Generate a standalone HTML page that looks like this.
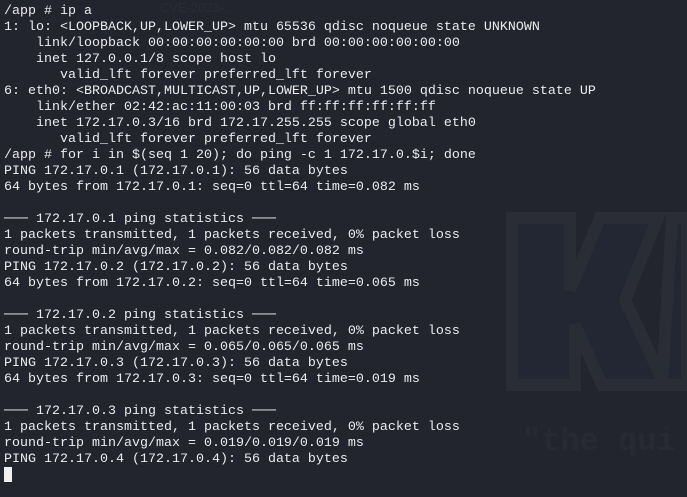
<!DOCTYPE html><html><head><style>
body{margin:0;width:687px;height:497px;background:#22242e;overflow:hidden;position:relative}
pre{position:absolute;left:4px;top:4px;margin:0;font-family:"Liberation Mono","DejaVu Sans Mono",monospace;font-size:13.33px;line-height:16px;color:#ececec;white-space:pre}
.cur{position:absolute;left:4px;top:467px;width:8px;height:15px;background:#f0f0f0}
</style></head><body>
<svg style="position:absolute;left:0;top:0" width="687" height="497">
<path d="M512 218 H570 V290 L600 218 H658 L625 300 L665 385 H602 L575 325 V385 H512 Z" fill="#232734" stroke="#2b2d36" stroke-width="12"/>
<path d="M672 218 L687 218 V385 H662 Z" fill="#232734" stroke="#2b2d36" stroke-width="12"/>
<text x="522" y="450" font-family="Liberation Mono" font-weight="bold" font-size="32" fill="#282a33">"the qui</text>
<text x="160" y="12" font-family="Liberation Sans" font-size="13" fill="#2a2c35">CVE-2023-...</text>
</svg>
<pre>/app # ip a
1: lo: &lt;LOOPBACK,UP,LOWER_UP&gt; mtu 65536 qdisc noqueue state UNKNOWN
    link/loopback 00:00:00:00:00:00 brd 00:00:00:00:00:00
    inet 127.0.0.1/8 scope host lo
       valid_lft forever preferred_lft forever
6: eth0: &lt;BROADCAST,MULTICAST,UP,LOWER_UP&gt; mtu 1500 qdisc noqueue state UP
    link/ether 02:42:ac:11:00:03 brd ff:ff:ff:ff:ff:ff
    inet 172.17.0.3/16 brd 172.17.255.255 scope global eth0
       valid_lft forever preferred_lft forever
/app # for i in $(seq 1 20); do ping -c 1 172.17.0.$i; done
PING 172.17.0.1 (172.17.0.1): 56 data bytes
64 bytes from 172.17.0.1: seq=0 ttl=64 time=0.082 ms

─── 172.17.0.1 ping statistics ───
1 packets transmitted, 1 packets received, 0% packet loss
round-trip min/avg/max = 0.082/0.082/0.082 ms
PING 172.17.0.2 (172.17.0.2): 56 data bytes
64 bytes from 172.17.0.2: seq=0 ttl=64 time=0.065 ms

─── 172.17.0.2 ping statistics ───
1 packets transmitted, 1 packets received, 0% packet loss
round-trip min/avg/max = 0.065/0.065/0.065 ms
PING 172.17.0.3 (172.17.0.3): 56 data bytes
64 bytes from 172.17.0.3: seq=0 ttl=64 time=0.019 ms

─── 172.17.0.3 ping statistics ───
1 packets transmitted, 1 packets received, 0% packet loss
round-trip min/avg/max = 0.019/0.019/0.019 ms
PING 172.17.0.4 (172.17.0.4): 56 data bytes
</pre>
<div class="cur"></div>
</body></html>
